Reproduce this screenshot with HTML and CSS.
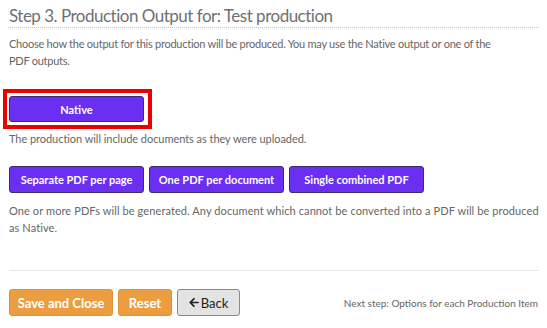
FILE: index.html
```html
<!DOCTYPE html>
<html>
<head>
<meta charset="utf-8">
<link rel="stylesheet" href="styles.css">
</head>
<body>
<div class="page">
  <h2 class="title">Step 3. Production Output for: Test production</h2>
  <p class="intro">Choose how the output for this production will be produced. You may use the Native output or one of the PDF outputs.</p>
  <div class="native-row">
    <span class="highlight"><button class="btn btn-purple btn-native">Native</button></span>
  </div>
  <p class="note note-native">The production will include documents as they were uploaded.</p>
  <div class="pdf-row">
    <button class="btn btn-purple">Separate PDF per page</button>
    <button class="btn btn-purple">One PDF per document</button>
    <button class="btn btn-purple">Single combined PDF</button>
  </div>
  <p class="note note-pdf">One or more PDFs will be generated. Any document which cannot be converted into a PDF will be produced as Native.</p>
  <hr class="divider">
  <div class="footer">
    <div class="footer-buttons">
      <button class="btn btn-orange btn-save">Save and Close</button>
      <button class="btn btn-orange btn-reset">Reset</button>
      <button class="btn btn-gray btn-back"><svg class="arrow" viewBox="0 0 448 512" width="10" height="11"><path d="M257.5 445.1l-22.2 22.2c-9.4 9.4-24.6 9.4-33.9 0L7 273c-9.4-9.4-9.4-24.6 0-33.9L201.4 44.7c9.4-9.4 24.6-9.4 33.9 0l22.2 22.2c9.5 9.5 9.3 25-.4 34.3L136.6 216H424c13.3 0 24 10.7 24 24v32c0 13.3-10.7 24-24 24H136.6l120.5 114.8c9.8 9.3 10 24.8.4 34.3z" fill="#222"/></svg>Back</button>
    </div>
    <span class="next-step">Next step: Options for each Production Item</span>
  </div>
</div>
</body>
</html>
```

FILE: styles.css
```css
html, body {
  margin: 0;
  padding: 0;
  background: #fff;
}

body {
  font-family: Lato, "Open Sans", sans-serif;
  color: #666;
}

.page {
  padding: 4px 8px 0 8px;
}

.title {
  margin: 0;
  font-family: Lato, "Open Sans", sans-serif;
  font-weight: 400;
  font-size: 17px;
  line-height: 23px;
  letter-spacing: -0.5px;
  color: #707070;
  padding-left: 1px;
  border-bottom: 1px dotted #c8c8c8;
}

.intro {
  margin: 7px 0 0 0;
  font-size: 11px;
  line-height: 17px;
  letter-spacing: -0.25px;
  padding-left: 1px;
  padding-right: 36px;
}

.note {
  margin: 0;
  font-size: 11px;
  line-height: 17px;
  padding-left: 1px;
}

.native-row {
  margin-top: 20px;
  margin-left: -5px;
  height: 40px;
}

.highlight {
  display: inline-block;
  border: 4px solid #ee0000;
  padding: 3px 4px 3px 2px;
}

.note-native {
  margin-top: 1px;
  letter-spacing: -0.05px;
}

.pdf-row {
  margin-top: 19px;
  padding-left: 1px;
  display: flex;
  gap: 5px;
}

.note-pdf {
  margin-top: 9px;
  letter-spacing: 0.1px;
}

.btn {
  font-family: Lato, "Open Sans", sans-serif;
  box-sizing: border-box;
  height: 27px;
  border-radius: 3px;
  cursor: pointer;
  display: inline-flex;
  align-items: center;
  justify-content: center;
  padding: 0;
  white-space: nowrap;
}

.btn-purple {
  background: #6a2ff0;
  border: 1px solid #3c2b6e;
  color: #fff;
  font-size: 11px;
  font-weight: 700;
  width: 135px;
}

.btn-native {
  height: 26px;
  display: flex;
}

.divider {
  margin: 34px 0 0 1px;
  border: 0;
  border-top: 1px solid #e8e8e8;
  height: 0;
}

.footer {
  margin-top: 18px;
  padding-left: 1px;
  display: flex;
  align-items: center;
  justify-content: space-between;
}

.footer-buttons {
  display: flex;
  gap: 5px;
}

.btn-orange {
  background: #ec9d40;
  border: 1px solid #e0913a;
  color: #fff;
  font-size: 13px;
  font-weight: 700;
}

.btn-save {
  width: 104px;
}

.btn-reset {
  width: 54px;
}

.btn-gray {
  background: #e3e3e3;
  border: 1px solid #8a8a8a;
  color: #222;
  font-size: 13px;
  font-weight: 400;
  width: 63px;
  gap: 2px;
}

.arrow {
  display: block;
}

.next-step {
  font-size: 10px;
  color: #666;
  margin-right: 1px;
  margin-top: 1px;
}
```
